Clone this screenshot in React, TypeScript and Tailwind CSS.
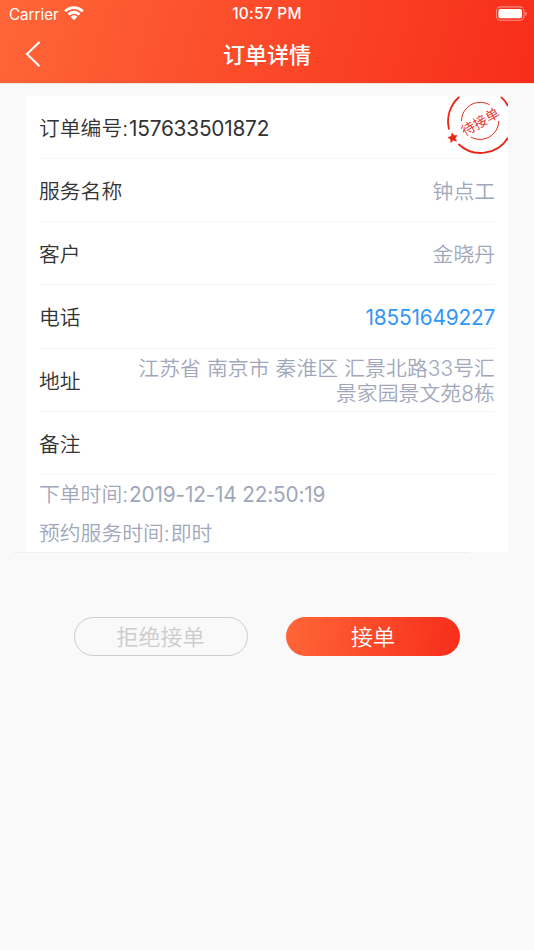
import type { ReactNode } from "react";

function StatusBar() {
  return (
    <div className="grid h-[27px] grid-cols-3 items-center pt-px text-[15.5px] leading-none">
      <div className="flex items-center pl-[9px]">
        <span className="w-[50px] whitespace-nowrap pt-px text-[15.2px]">Carrier</span>
        <svg className="ml-[5px] -mt-px h-[15px] w-5" viewBox="0 0 20 15" fill="currentColor">
          <path d="M10 .2c3.6 0 6.9 1.4 9.4 3.7.3.2.3.5 0 .8l-1.2 1.2c-.2.2-.5.2-.8 0A10.8 10.8 0 0 0 10 3.1c-2.8 0-5.4 1-7.4 2.8-.3.2-.6.2-.8 0L.6 4.7c-.3-.3-.3-.6 0-.8A13.7 13.7 0 0 1 10 .2Z" />
          <path d="M10 4.8c2.4 0 4.5.9 6.1 2.4.3.2.3.5 0 .8l-1.3 1.3c-.2.2-.5.2-.8 0a5.8 5.8 0 0 0-8 0c-.3.2-.6.2-.8 0L3.9 8c-.3-.3-.3-.6 0-.8A8.9 8.9 0 0 1 10 4.8Z" />
          <path d="M10 9.3c1.1 0 2.1.4 2.9 1.1.3.3.3.6 0 .9l-2.4 2.5c-.3.3-.7.3-1 0l-2.4-2.5c-.3-.3-.3-.6 0-.9.8-.7 1.8-1.1 2.9-1.1Z" />
        </svg>
      </div>
      <span className="whitespace-nowrap text-center text-[15.4px] font-medium tracking-[0.3px]">10:57 PM</span>
      <svg className="-mt-px ml-auto mr-[6px] h-[15px] w-[32px]" viewBox="0 0 32 15" fill="none">
        <rect x=".4" y=".9" width="27.6" height="13.4" rx="4" stroke="white" strokeOpacity=".45" strokeWidth="1.1" />
        <rect x="2.4" y="2.9" width="23.6" height="9.4" rx="2" fill="white" />
        <path d="M29.5 5.4c1.7.7 1.7 3.9 0 4.6Z" fill="white" fillOpacity=".55" />
      </svg>
    </div>
  );
}

function Stamp() {
  return (
    <svg className="absolute right-0 top-0 h-[60px] w-[62px]" viewBox="0 0 62 60" fill="none" stroke="#ea2716">
      <path d="M3.1 33.6A32.2 32.2 0 0 1 13.2 1" strokeWidth="1.8" />
      <path d="M12.4 48A32.2 32.2 0 0 0 62 41.8" strokeWidth="1.8" />
      <path d="M55 .8A32.2 32.2 0 0 1 62 10" strokeWidth="1.8" />
      <path d="M15.5 25A18.7 18.7 0 0 1 43.5 8.8" strokeWidth="1" />
      <path d="M52.7 25A18.7 18.7 0 0 1 24.8 41" strokeWidth="1" />
      <path d="m6.2 37 1.6 2.6 3.2-.1-1.8 2.7 1.3 3-3.3-.9-2.4 2.2-.2-3.2L1.9 41.5l3.1-1Z" fill="#ea2716" strokeWidth=".6" />
      <text x="34" y="31" transform="rotate(-30 34 25.5)" textAnchor="middle" fill="#ea2716" stroke="none" fontSize="13.8">
        待接单
      </text>
    </svg>
  );
}

function Row({ label, children }: { label: string; children?: ReactNode }) {
  return (
    <div className="flex h-[63.2px] items-center justify-between border-b border-[#f7f7f7] pt-[2px]">
      <span className="shrink-0 pt-px text-[#333]">{label}</span>
      <span className="w-[362px] text-right leading-[25px] text-[#a1a7ba]">{children}</span>
    </div>
  );
}

export default function App() {
  return (
    <div className="min-h-[950px] w-full bg-[#f9f9f9] font-['Inter','Noto_Sans_CJK_SC',sans-serif]">
      <header className="h-[84px] border-b border-[#e9e4e3] bg-linear-[105deg,#ff6638,#f72d1a] bg-clip-padding text-white">
        <StatusBar />
        <div className="grid h-[54px] grid-cols-[60px_1fr_60px] items-center">
          <svg className="ml-[25px] h-[28px] w-[18px]" viewBox="0 0 18 28" fill="none" stroke="currentColor" strokeWidth="2">
            <path d="M14.5 2 2 14 14.5 26.3" />
          </svg>
          <h1 className="pt-[2px] text-center text-[22px] font-medium leading-none">订单详情</h1>
        </div>
      </header>

      <main className="pt-3">
        <section className="relative ml-[26px] h-[456px] w-[482px] bg-white px-[13px] text-[20.8px] font-[350]">
          <div className="flex h-[63px] items-center border-b border-[#f7f7f7] pt-[3px] text-[#333]">
            <span>订单编号<span className="tracking-[1px]">:</span><span className="font-normal tracking-[-0.22px]">157633501872</span></span>
          </div>
          <Stamp />
          <Row label="服务名称">钟点工</Row>
          <Row label="客户">金晓丹</Row>
          <Row label="电话">
            <span className="font-normal tracking-[-0.18px] text-[#3296f5]">18551649227</span>
          </Row>
          <Row label="地址">
            <span className="tracking-[0.1px]">江苏省 南京市 秦淮区 汇景北路33号汇景家园景文苑8栋</span>
          </Row>
          <Row label="备注" />
          <p className="flex h-[39px] items-center pt-px text-[#a1a7ba]">
            <span>下单时间<span className="tracking-[1px]">:</span><span className="font-normal tracking-[-0.18px]">2019-12-14 22:50:19</span></span>
          </p>
          <p className="flex h-[38px] items-center pt-[2px] text-[#a1a7ba]">
            <span>预约服务时间<span className="tracking-[1px]">:</span>即时</span>
          </p>
        </section>
        <div className="ml-[13px] h-px w-[456px] bg-[#f1f1f1]" />

        <div className="mt-[64px] flex gap-[38.5px] pl-[73.5px] text-[22px] font-[350]">
          <button className="h-[39px] w-[174px] rounded-full border-[1.5px] border-[#ccc] leading-none text-[#ccc]">拒绝接单</button>
          <button className="h-[39px] w-[174px] rounded-full bg-linear-[98deg,#ff6638,#f72d1a] leading-none text-white">接单</button>
        </div>
      </main>
    </div>
  );
}
